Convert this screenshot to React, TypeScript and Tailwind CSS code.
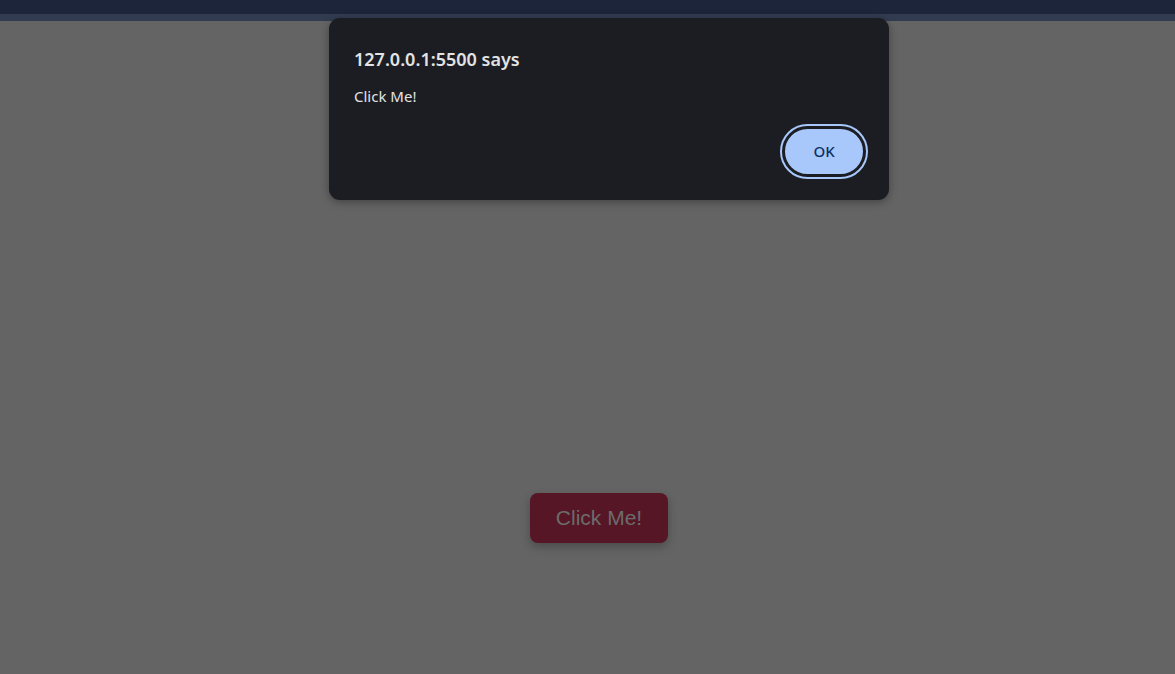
import React from "react";

export default function App() {
  return (
    <div className="relative h-[674px] w-full overflow-hidden bg-[#646464] font-['Noto_Sans',sans-serif]">
      <div className="h-[14px] bg-[#1c253a]" />
      <div className="h-[7px] bg-[#323c51]" />

      <div className="flex h-[653px] flex-col items-center pt-[472px]">
        <button className="ml-[23px] h-[50px] w-[138px] rounded-lg bg-[#561626] font-['Liberation_Sans',sans-serif] text-[21px] text-[#6c6c6c] shadow-[0_4px_10px_rgba(0,0,0,0.25)]">
          Click Me!
        </button>
      </div>

      <div className="absolute left-[329px] top-[18px] flex h-[182px] w-[560px] flex-col rounded-[11px] bg-[#1b1d22] pl-[25px] pr-[23px] pt-[29px] shadow-[0_2px_8px_rgba(0,0,0,0.35)]">
        <h1 className="text-[18px] leading-[24px] font-semibold text-[#e3e3e3]">
          127.0.0.1:5500 says
        </h1>
        <p className="mt-[15px] text-[15px] leading-[20px] text-[#e3e3e3]">Click Me!</p>
        <div className="mt-[20px] flex justify-end">
          <button className="h-[51px] w-[84px] rounded-full border-[3px] border-[#1b1d22] bg-[#a8c7fa] text-[15px] font-medium text-[#0a3166] outline-2 outline-[#a8c7fa]">
            OK
          </button>
        </div>
      </div>
    </div>
  );
}
